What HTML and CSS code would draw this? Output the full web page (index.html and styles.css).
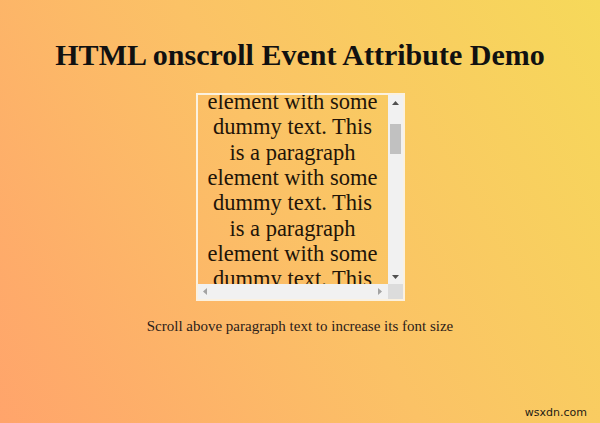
FILE: index.html
```html
<!DOCTYPE html>
<html>
<head>
<meta charset="utf-8">
<link rel="stylesheet" href="styles.css">
</head>
<body>
<h1 class="title">HTML onscroll Event Attribute Demo</h1>
<div class="frame">
  <div class="viewport" id="viewport">
    <p class="para">This is a paragraph element with some dummy text. This is a paragraph element with some dummy text. This is a paragraph element with some dummy text. This is a paragraph element with some dummy text. This is a paragraph element with some dummy text. This is a paragraph element with some dummy text. This is a paragraph element with some dummy text. This is a paragraph element with some dummy text. This is a paragraph element with some dummy text. This is a paragraph element with some dummy text. This is a paragraph element with some dummy text. This is a paragraph element with some dummy text. This is a paragraph element with some dummy text.</p>
  </div>
  <div class="vbar">
    <div class="sbtn"><svg width="7" height="4" viewBox="0 0 7 4"><path d="M3.5 0L7 4H0z" fill="#505050"/></svg></div>
    <div class="vtrack"><div class="vthumb"></div></div>
    <div class="sbtn"><svg width="7" height="4" viewBox="0 0 7 4"><path d="M0 0H7L3.5 4z" fill="#505050"/></svg></div>
  </div>
  <div class="hbar">
    <div class="sbtn"><svg width="4" height="7" viewBox="0 0 4 7"><path d="M0 3.5L4 0V7z" fill="#a3a3a3"/></svg></div>
    <div class="htrack"></div>
    <div class="sbtn"><svg width="4" height="7" viewBox="0 0 4 7"><path d="M0 0L4 3.5L0 7z" fill="#a3a3a3"/></svg></div>
  </div>
  <div class="corner"></div>
</div>
<p class="note">Scroll above paragraph text to increase its font size</p>
<div class="watermark">wsxdn.com</div>
<script src="script.js"></script>
</body>
</html>
```
FILE: styles.css
```css
html, body {
  margin: 0;
  padding: 0;
  height: 100%;
}
body {
  font-family: "Liberation Serif", "Times New Roman", serif;
  background: linear-gradient(60deg, #ffa46b 0%, #fbc266 50%, #f6d95a 100%);
  display: flex;
  flex-direction: column;
  align-items: center;
  position: relative;
  overflow: hidden;
}
.title {
  font-size: 30px;
  font-weight: bold;
  color: #111;
  margin: 38px 0 21px;
  line-height: 34px;
}
.frame {
  box-sizing: border-box;
  width: 209px;
  height: 208px;
  border: 2px solid #fbf1df;
  display: grid;
  grid-template-columns: 1fr 15px;
  grid-template-rows: 1fr 15px;
}
.viewport {
  overflow: hidden;
  text-align: center;
  min-width: 0;
  min-height: 0;
  padding: 0 8px;
}
.para {
  font-size: 22.5px;
  line-height: 25.3px;
  color: #221408;
  margin: 0;
}
.vbar {
  display: flex;
  flex-direction: column;
  background: #f1f1f1;
}
.hbar {
  display: flex;
  background: #f1f1f1;
}
.sbtn {
  width: 15px;
  height: 15px;
  flex: none;
  display: flex;
  align-items: center;
  justify-content: center;
}
.vtrack {
  flex: 1;
  padding: 14px 2px 0;
}
.vthumb {
  height: 30px;
  background: #c1c1c1;
}
.htrack {
  flex: 1;
}
.corner {
  background: #dcdcdc;
}
.note {
  font-size: 15px;
  color: #2b2018;
  margin: 17px 0 0;
}
.watermark {
  position: absolute;
  right: 13px;
  bottom: 4px;
  font-family: "DejaVu Sans", sans-serif;
  font-size: 11px;
  color: #1e1a14;
}
```
FILE: script.js
```js
document.getElementById('viewport').scrollTop = 107;
```
